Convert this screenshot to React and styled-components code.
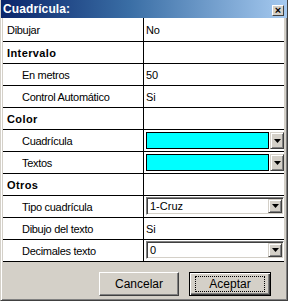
import styled, { createGlobalStyle } from 'styled-components';

const GlobalStyle = createGlobalStyle`
	html, body {
		margin: 0;
		padding: 0;
		background: #d4d0c8;
	}
	body {
		font-family: 'Liberation Sans', Arial, sans-serif;
		font-size: 11px;
	}
`;

const ROWS = [
	{ label: 'Dibujar', value: 'No', first: true },
	{ label: 'Intervalo', header: true },
	{ label: 'En metros', value: '50', indent: true },
	{ label: 'Control Automático', value: 'Si', indent: true },
	{ label: 'Color', header: true },
	{ label: 'Cuadrícula', color: '#00ffff', indent: true },
	{ label: 'Textos', color: '#00ffff', indent: true },
	{ label: 'Otros', header: true },
	{ label: 'Tipo cuadrícula', combo: '1-Cruz', indent: true },
	{ label: 'Dibujo del texto', value: 'Si', indent: true },
	{ label: 'Decimales texto', combo: '0', indent: true },
];

function Arrow() {
	return (
		<svg width="7" height="4" viewBox="0 0 7 4">
			<path d="M0 0h7L3.5 4z" fill="#000" />
		</svg>
	);
}

function DropButton() {
	return (
		<DropBtn>
			<Arrow />
		</DropBtn>
	);
}

function Cuadricula() {
	const rows = ROWS.map((row, i) => {
		let value = null;
		if (row.value) value = <ValueText>{row.value}</ValueText>;
		if (row.color) {
			value = (
				<ColorPick>
					<Swatch color={row.color} />
					<DropButton />
				</ColorPick>
			);
		}
		if (row.combo) {
			value = (
				<Combo>
					<ComboText>{row.combo}</ComboText>
					<DropButton />
				</Combo>
			);
		}
		return (
			<Row key={i} $first={row.first}>
				<Label $header={row.header} $indent={row.indent}>
					{row.label}
				</Label>
				<Value>{value}</Value>
			</Row>
		);
	});

	return (
		<Window>
			<TitleBar>
				<Title>Cuadrícula:</Title>
				<CloseBtn>×</CloseBtn>
			</TitleBar>
			<Grid>{rows}</Grid>
			<Footer>
				<Button>Cancelar</Button>
				<DefaultButton>
					<Focus>Aceptar</Focus>
				</DefaultButton>
			</Footer>
		</Window>
	);
}

export default function App() {
	return (
		<>
			<GlobalStyle />
			<Cuadricula />
		</>
	);
}

const Window = styled.div`
	width: 288px;
	height: 301px;
	box-sizing: border-box;
	background: #d4d0c8;
	border-left: 1px solid #d4d0c8;
	border-right: 1px solid #404040;
	border-bottom: 1px solid #404040;
	box-shadow: inset 1px 0 0 #ffffff, inset -1px -1px 0 #808080;
	display: flex;
	flex-direction: column;
	overflow: hidden;
`;

const TitleBar = styled.div`
	height: 18px;
	margin: 0 -1px 0 -1px;
	padding: 0 4px 0 3px;
	background: linear-gradient(to right, #0a246a 0%, #3a6ea5 45%, #a6caf0 100%);
	display: flex;
	align-items: center;
	justify-content: space-between;
	flex-shrink: 0;
`;

const Title = styled.span`
	color: #ffffff;
	font-weight: bold;
	font-size: 12px;
	letter-spacing: 0.1px;
`;

const CloseBtn = styled.div`
	width: 12px;
	height: 11px;
	margin-top: 2px;
	box-sizing: border-box;
	background: #d4d0c8;
	border-top: 1px solid #ffffff;
	border-left: 1px solid #ffffff;
	border-right: 1px solid #404040;
	border-bottom: 1px solid #404040;
	display: flex;
	align-items: center;
	justify-content: center;
	font-size: 11px;
	line-height: 9px;
	font-weight: bold;
	color: #000;
`;

const Grid = styled.div`
	margin: 0 3px 0 2px;
	background: #ffffff;
	display: flex;
	flex-direction: column;
`;

const Row = styled.div`
	height: ${(p) => (p.$first ? 24 : 22)}px;
	box-sizing: border-box;
	border-bottom: 1px solid #000000;
	display: grid;
	grid-template-columns: 141px 1fr;
`;

const Label = styled.div`
	border-right: 1px solid #000000;
	padding-left: ${(p) => (p.$indent ? 19 : 4)}px;
	display: flex;
	align-items: center;
	font-weight: ${(p) => (p.$header ? 'bold' : 'normal')};
	letter-spacing: ${(p) => (p.$header ? '0.4px' : '-0.3px')};
	color: #000;
	white-space: nowrap;
`;

const Value = styled.div`
	padding: 1px 0 0 2px;
	display: flex;
	align-items: flex-start;
`;

const ValueText = styled.span`
	align-self: center;
	letter-spacing: -0.2px;
	color: #000;
`;

const ColorPick = styled.div`
	margin-top: 1px;
	height: 17px;
	width: 100%;
	display: flex;
	gap: 1px;
`;

const Swatch = styled.div`
	flex: 1;
	box-sizing: border-box;
	border: 1px solid #000;
	background: ${(p) => p.color};
`;

const DropBtn = styled.div`
	width: 14px;
	box-sizing: border-box;
	background: #d4d0c8;
	border-top: 1px solid #d4d0c8;
	border-left: 1px solid #d4d0c8;
	border-right: 1px solid #404040;
	border-bottom: 1px solid #404040;
	box-shadow: inset 1px 1px 0 #ffffff, inset -1px -1px 0 #808080;
	display: flex;
	align-items: center;
	justify-content: center;
`;

const Combo = styled.div`
	height: 18px;
	width: 100%;
	box-sizing: border-box;
	background: #ffffff;
	border-top: 1px solid #808080;
	border-left: 1px solid #808080;
	border-right: 1px solid #ffffff;
	border-bottom: 1px solid #ffffff;
	box-shadow: inset 1px 1px 0 #404040, inset -1px -1px 0 #d4d0c8;
	padding: 1px;
	display: flex;
	align-items: stretch;
`;

const ComboText = styled.span`
	flex: 1;
	padding-left: 2px;
	display: flex;
	align-items: center;
	color: #000;
`;

const Footer = styled.div`
	flex: 1;
	display: flex;
	justify-content: flex-end;
	align-items: flex-start;
	gap: 10px;
	padding: 10px 16px 0 0;
`;

const Button = styled.div`
	width: 80px;
	height: 24px;
	box-sizing: border-box;
	background: #d4d0c8;
	border-top: 1px solid #ffffff;
	border-left: 1px solid #ffffff;
	border-right: 1px solid #404040;
	border-bottom: 1px solid #404040;
	box-shadow: inset -1px -1px 0 #808080;
	display: flex;
	align-items: center;
	justify-content: center;
	font-size: 12px;
	color: #000;
`;

const DefaultButton = styled(Button)`
	width: 82px;
	border: 1px solid #000000;
	box-shadow: inset 1px 1px 0 #ffffff, inset -1px -1px 0 #404040, inset -2px -2px 0 #808080;
`;

const Focus = styled.span`
	width: 68px;
	height: 14px;
	border: 1px dotted #000;
	display: flex;
	align-items: center;
	justify-content: center;
`;
